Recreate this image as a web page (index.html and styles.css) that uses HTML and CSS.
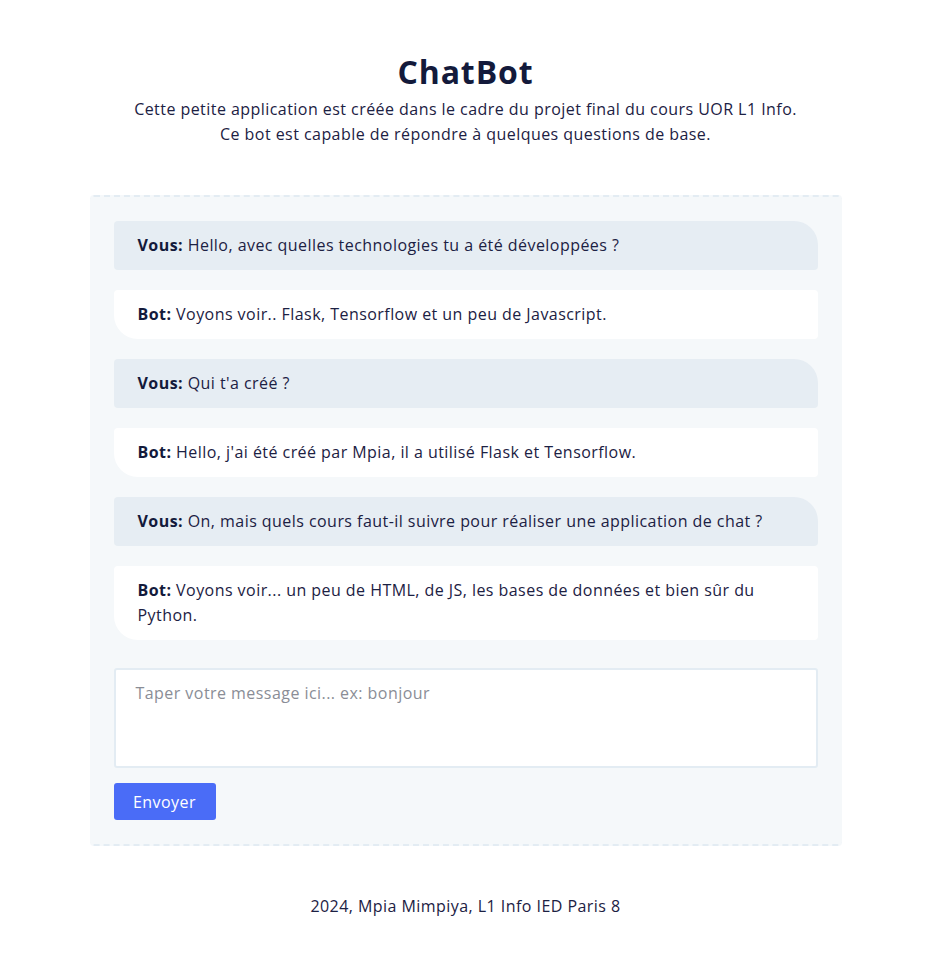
FILE: index.html
```html
<!DOCTYPE html>
<html lang="fr">
<head>
<meta charset="utf-8">
<title>ChatBot</title>
<link rel="stylesheet" href="styles.css">
</head>
<body>
<header class="header">
  <h1 class="title">ChatBot</h1>
  <p class="subtitle">Cette petite application est créée dans le cadre du projet final du cours UOR L1 Info.<br>Ce bot est capable de répondre à quelques questions de base.</p>
</header>
<main class="chat">
  <div class="msg msg-user"><strong>Vous:</strong> Hello, avec quelles technologies tu a été développées ?</div>
  <div class="msg msg-bot"><strong>Bot:</strong> Voyons voir.. Flask, Tensorflow et un peu de Javascript.</div>
  <div class="msg msg-user"><strong>Vous:</strong> Qui t'a créé ?</div>
  <div class="msg msg-bot"><strong>Bot:</strong> Hello, j'ai été créé par Mpia, il a utilisé Flask et Tensorflow.</div>
  <div class="msg msg-user"><strong>Vous:</strong> On, mais quels cours faut-il suivre pour réaliser une application de chat ?</div>
  <div class="msg msg-bot"><strong>Bot:</strong> Voyons voir... un peu de HTML, de JS, les bases de données et bien sûr du Python.</div>
  <form class="form">
    <textarea class="input" placeholder="Taper votre message ici... ex: bonjour"></textarea>
    <button type="button" class="send">Envoyer</button>
  </form>
</main>
<footer class="footer">2024, Mpia Mimpiya, L1 Info IED Paris 8</footer>
</body>
</html>
```
FILE: styles.css
```css
* { box-sizing: border-box; }
body {
  margin: 0;
  background: #ffffff;
  font-family: "Open Sans", "DejaVu Sans", sans-serif;
  color: #1c2143;
  font-size: 16px;
  line-height: 25px;
  letter-spacing: 0.45px;
}
.header {
  text-align: center;
  padding-top: 52px;
}
.title {
  margin: 0;
  font-size: 32px;
  line-height: 40px;
  font-weight: 700;
  letter-spacing: 0.9px;
  color: #131a3b;
}
.subtitle {
  margin: 5px 0 0;
}
.chat {
  width: 752px;
  margin: 48px auto 0;
  padding: 24px;
  background: #f5f8fa;
  border-top: 2px dashed #e3ecf3;
  border-bottom: 2px dashed #e3ecf3;
  border-radius: 4px;
}
.msg {
  padding: 12px 24px;
  margin-bottom: 20px;
}
.msg strong { font-weight: 700; color: #131a3b; }
.msg-user {
  background: #e6edf3;
  border-radius: 4px 24px 4px 4px;
}
.msg-bot {
  background: #ffffff;
  border-radius: 4px 4px 4px 24px;
}
.form {
  margin-top: 28px;
  display: flex;
  flex-direction: column;
  align-items: flex-start;
  gap: 15px;
}
.input {
  width: 100%;
  height: 100px;
  border: 2px solid #e3ecf3;
  border-radius: 3px;
  background: #fff;
  padding: 11px 20px;
  font-family: inherit;
  font-size: 16px;
  line-height: 25px;
  letter-spacing: 0.45px;
  color: #1c2143;
  resize: none;
  outline: none;
}
.input::placeholder { color: #8a8d96; }
.send {
  height: 37px;
  width: 102px;
  border: none;
  border-radius: 3px;
  background: #4a6cf7;
  color: #fff;
  font-family: inherit;
  font-size: 16px;
  letter-spacing: 0.45px;
  padding: 0;
}
.footer {
  text-align: center;
  margin-top: 48px;
  padding-bottom: 40px;
}
```
